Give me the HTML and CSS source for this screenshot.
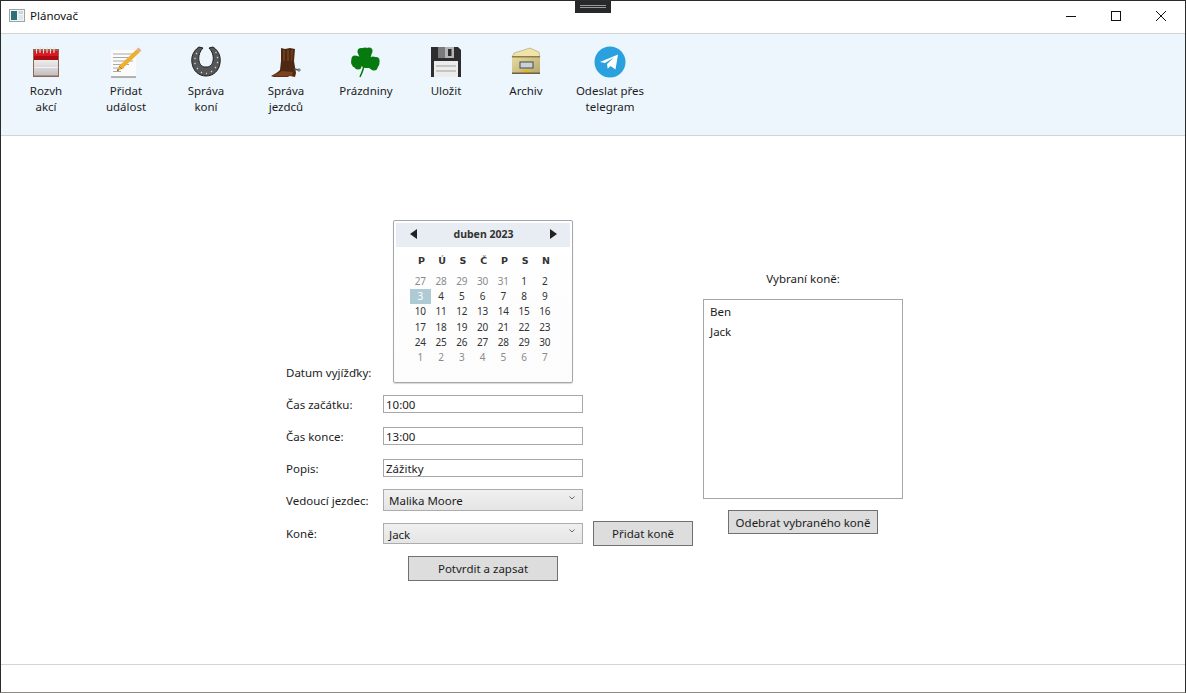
FILE: index.html
```html
<!DOCTYPE html>
<html lang="cs">
  <head>
    <meta charset="utf-8" />
    <title>Plánovač</title>
    <link rel="stylesheet" href="styles.css">
  </head>

  <body>
    <div class="window">
      <div class="grip"><span></span></div>

      <header class="titlebar">
        <svg class="app-icon" width="16" height="14" viewBox="0 0 16 14">
          <rect x="0.5" y="0.5" width="15" height="12" fill="#f2f5f6" stroke="#9aa5a8" />
          <rect x="2" y="2" width="6" height="9" fill="#2f6f7c" />
          <rect x="9.5" y="2" width="4.5" height="3" fill="#c9d6da" />
          <rect x="9.5" y="6" width="4.5" height="5" fill="#dfe6e8" />
        </svg>
        <span class="app-title">Plánovač</span>
        <div class="win-buttons">
          <svg width="12" height="12" viewBox="0 0 12 12"><path d="M1 6.500h10" stroke="#111" fill="none" /></svg>
          <svg width="12" height="12" viewBox="0 0 12 12"><rect x="1.500" y="1.500" width="9" height="9" stroke="#111" fill="none" /></svg>
          <svg width="12" height="12" viewBox="0 0 12 12"><path d="M1 1l10 10M11 1L1 11" stroke="#111" fill="none" /></svg>
        </div>
      </header>

      <nav class="ribbon">
        <a class="tool">
          <svg class="tool-icon" viewBox="0 0 32 32">
            <defs>
              <linearGradient id="pageGrad" x1="0" y1="0" x2="0" y2="1">
                <stop offset="0" stop-color="#efecec" />
                <stop offset="1" stop-color="#c4c0c2" />
              </linearGradient>
              <linearGradient id="boxGrad" x1="0" y1="0" x2="1" y2="1">
                <stop offset="0" stop-color="#e8dca0" />
                <stop offset="1" stop-color="#b3a672" />
              </linearGradient>
            </defs>
            <rect x="3" y="3" width="26" height="28" fill="#8b6a55" />
            <rect x="4" y="5" width="24" height="9" fill="#dd1620" />
            <rect x="4" y="10" width="24" height="4" fill="#a80d14" />
            <rect x="4" y="14" width="24" height="15.500" fill="url(#pageGrad)" />
            <rect x="4" y="21" width="24" height="1" fill="#f4f2f2" />
            <path d="M6.500 1.500v6M10 1v6M13.500 1.500v6M17 1v6M20.500 1.500v6M24 1v6" stroke="#ecdcd6" stroke-width="1.100" />
          </svg>
          <span>Rozvh<br>akcí</span>
        </a>
        <a class="tool">
          <svg class="tool-icon" viewBox="0 0 32 32">
            <rect x="1" y="4" width="25" height="27" fill="#fbfbfb" />
            <path d="M3 8h21M3 11.500h21M3 15h20M3 18.500h16M3 22h11M3 25.500h8" stroke="#a9a9a9" />
            <path d="M1 31h25" stroke="#6d6d6d" />
            <path d="M7 25l2-5L27 3l3 3-18 17z" fill="#edb02f" />
            <path d="M9 20l3 3" stroke="#b57c15" />
            <path d="M27 3l1.500-1.500 3 3L30 6z" fill="#e5a3a0" />
            <path d="M7 25l.7-2 1.300 1.200z" fill="#333" />
          </svg>
          <span>Přidat<br>událost</span>
        </a>
        <a class="tool">
          <svg class="tool-icon" viewBox="0 0 32 32">
            <path d="M9 1C3 5 1 11 2 17c1 8 7 13 14 13s13-5 14-13c1-6-1-12-7-16l-4 1c3 3 5 8 4 13-1 4-3 6-7 6s-6-2-7-6c-1-5 1-10 4-13z" fill="#545658" stroke="#1e1e1e" stroke-width="1" />
            <path d="M6 7l1 1M4.500 12l1 1M4.500 17l1 1M7 22l1 1M11 26l1 1M16 27.500h1M21 26l1-1M25 22l1-1M27 17l1-1M27 12l1-1M25.500 7l1-1" stroke="#cfcfcf" stroke-width="1.300" />
          </svg>
          <span>Správa<br>koní</span>
        </a>
        <a class="tool">
          <svg class="tool-icon" viewBox="0 0 32 32">
            <path d="M11 2l4 1 5-1 5 1-1 12 1 6 1 6-1 4-5-1-3 1H4l-3-1c3-2 6-3 9-6l1-9z" fill="#4d2812" />
            <path d="M13 4h10l-1 11h-9z" fill="#6b3d1e" />
            <path d="M16 4v11M20 4v11" stroke="#38190a" />
            <path d="M2 30c4-2 7-3 10-5l11 1-1 4-4-.500-3 1z" fill="#7d4220" />
            <path d="M24 23l5 1" stroke="#555" stroke-width="1.500" />
            <path d="M29 22v4M27 24h4" stroke="#777" />
          </svg>
          <span>Správa<br>jezdců</span>
        </a>
        <a class="tool">
          <svg class="tool-icon" viewBox="0 0 32 32">
            <circle cx="15" cy="8" r="6.500" fill="#067a0e" />
            <circle cx="11" cy="5.500" r="3.500" fill="#067a0e" />
            <circle cx="19" cy="5" r="3.500" fill="#067a0e" />
            <circle cx="7" cy="16" r="6" fill="#067a0e" />
            <circle cx="5" cy="13" r="3.500" fill="#067a0e" />
            <circle cx="8" cy="20" r="3.500" fill="#067a0e" />
            <circle cx="23" cy="17" r="6.500" fill="#067a0e" />
            <circle cx="26" cy="14.500" r="3.500" fill="#067a0e" />
            <circle cx="24" cy="21" r="3.500" fill="#067a0e" />
            <path d="M10 10h10l3 12-8 0-6-3z" fill="#067a0e" />
            <path d="M14 20c-1 4-2 7-4 11" stroke="#067a0e" stroke-width="1.500" fill="none" />
          </svg>
          <span>Prázdniny</span>
        </a>
        <a class="tool">
          <svg class="tool-icon" viewBox="0 0 32 32">
            <path d="M1 1h27l3 3v27H1z" fill="#2d2d30" />
            <rect x="8" y="1" width="16" height="11" fill="#b5b5b5" />
            <rect x="8" y="1" width="7" height="11" fill="#7a7a7a" />
            <rect x="18" y="3" width="3.500" height="7" fill="#2d2d30" />
            <rect x="4" y="15" width="24" height="16" fill="#ececec" />
            <path d="M6 20h20M6 25h20" stroke="#9d9d9d" />
          </svg>
          <span>Uložit</span>
        </a>
        <a class="tool">
          <svg class="tool-icon" viewBox="0 0 32 32">
            <path d="M4 7l16-5 9 4 1 5H2z" fill="#efe3aa" stroke="#a18e58" stroke-width="0.500" />
            <rect x="2" y="10" width="28" height="18" fill="url(#boxGrad)" />
            <rect x="2" y="10" width="28" height="1.500" fill="#8d7d48" />
            <rect x="2" y="26.500" width="28" height="1.500" fill="#6f6237" />
            <rect x="10" y="16" width="13" height="6" fill="#c7d3d8" stroke="#4a4a42" />
            <path d="M13 25h7" stroke="#e0b820" stroke-width="2" />
          </svg>
          <span>Archiv</span>
        </a>
        <a class="tool tool--wide">
          <svg class="tool-icon" viewBox="0 0 32 32">
            <circle cx="16" cy="16" r="15.500" fill="#2aa1de" />
            <path d="M6 16L24 8.500 21.500 23.500l-5-3.500-2.800 2.700-.7-4.700 7-6.500-9 5.500z" fill="#fff" />
          </svg>
          <span>Odeslat přes<br>telegram</span>
        </a>
      </nav>

      <main class="content">
        <section class="form">
          <label class="form-label form-label--date">Datum vyjížďky:</label>
          <div class="calendar">
            <div class="cal-head">
              <svg width="8" height="10" viewBox="0 0 8 10"><path d="M7 0v10L0 5z" fill="#222" /></svg>
              <span>duben 2023</span>
              <svg width="8" height="10" viewBox="0 0 8 10"><path d="M1 0v10l7-5z" fill="#222" /></svg>
            </div>
            <div class="cal-days">
              <b>P</b><b>Ú</b><b>S</b><b>Č</b><b>P</b><b>S</b><b>N</b>
            </div>
            <div class="cal-grid">
              <span class="dim">27</span><span class="dim">28</span><span class="dim">29</span><span class="dim">30</span><span class="dim">31</span><span>1</span><span>2</span>
              <span class="today">3</span><span>4</span><span>5</span><span>6</span><span>7</span><span>8</span><span>9</span>
              <span>10</span><span>11</span><span>12</span><span>13</span><span>14</span><span>15</span><span>16</span>
              <span>17</span><span>18</span><span>19</span><span>20</span><span>21</span><span>22</span><span>23</span>
              <span>24</span><span>25</span><span>26</span><span>27</span><span>28</span><span>29</span><span>30</span>
              <span class="dim">1</span><span class="dim">2</span><span class="dim">3</span><span class="dim">4</span><span class="dim">5</span><span class="dim">6</span><span class="dim">7</span>
            </div>
          </div>
          <span></span>

          <label class="form-label">Čas začátku:</label>
          <input class="text-input" type="text" value="10:00" />
          <span></span>

          <label class="form-label">Čas konce:</label>
          <input class="text-input" type="text" value="13:00" />
          <span></span>

          <label class="form-label">Popis:</label>
          <input class="text-input" type="text" value="Zážitky" />
          <span></span>

          <label class="form-label">Vedoucí jezdec:</label>
          <div class="combo combo--tall">
            <span>Malika Moore</span>
            <svg class="chevron" width="6" height="4" viewBox="0 0 6 4"><path d="M.5.500l2.500 2.500 2.500-2.500" stroke="#666" fill="none" /></svg>
          </div>
          <span></span>

          <label class="form-label">Koně:</label>
          <div class="combo">
            <span>Jack</span>
            <svg class="chevron" width="6" height="4" viewBox="0 0 6 4"><path d="M.5.500l2.500 2.500 2.500-2.500" stroke="#666" fill="none" /></svg>
          </div>
          <button class="btn btn--add">Přidat koně</button>

          <span></span>
          <button class="btn btn--confirm">Potvrdit a zapsat</button>
        </section>

        <aside class="picked">
          <p class="picked-title">Vybraní koně:</p>
          <ul class="picked-list">
            <li>Ben</li>
            <li>Jack</li>
          </ul>
          <button class="btn btn--remove">Odebrat vybraného koně</button>
        </aside>
      </main>

      <footer class="statusbar"></footer>
    </div>
  </body>
</html>
```

FILE: styles.css
```css
:root {
  font-family: 'Noto Sans', 'Open Sans', sans-serif;
  font-size: 11.5px;
  color: #1c1c1c;
}

* {
  box-sizing: border-box;
}

body {
  margin: 0;
  background: white;
}

.window {
  position: relative;
  display: flex;
  flex-direction: column;
  height: 693px;
  overflow: hidden;
  border: 1px solid #2b2b2b;
  border-bottom-color: #8a8a80;
}

/* the little dark tab that hangs from the top edge */
.grip {
  position: absolute;
  top: -1px;
  left: 574px;
  width: 36px;
  height: 13px;
  background: #26282a;
}

.grip span {
  display: block;
  width: 26px;
  margin: 5px auto 0;
  height: 3px;
  border-top: 1px solid #9a9a9a;
  border-bottom: 1px solid #9a9a9a;
}

.titlebar {
  display: flex;
  align-items: center;
  height: 33px;
  padding: 0 0 3px 8px;
  border-bottom: 1px solid #d4d4d4;
  flex-shrink: 0;
}

.app-title {
  margin-left: 5px;
  font-size: 11.5px;
  color: #111;
}

.win-buttons {
  display: flex;
  gap: 33px;
  margin-left: auto;
  margin-right: 18px;
}

.ribbon {
  display: flex;
  height: 102px;
  padding: 12px 0 0 5px;
  flex-shrink: 0;
  background: #eef6fd;
  border-bottom: 1px solid #d4d4d4;
}

.tool {
  display: flex;
  flex-direction: column;
  align-items: center;
  width: 80px;
  line-height: 16px;
  text-align: center;
}

.tool--wide {
  width: 88px;
}

.tool-icon {
  display: block;
  width: 32px;
  height: 32px;
  margin-bottom: 5px;
}

.content {
  display: flex;
  flex: 1;
  padding: 84px 0 0 285px;
}

.form {
  display: grid;
  grid-template-columns: 97px 200px 110px;
  grid-template-rows: 168px 32px 32px 32px 32px 35px auto;
  width: 417px;
  align-items: center;
  align-content: start;
}

.form-label {
  white-space: nowrap;
}

.form-label--date {
  align-self: end;
  padding-bottom: 8px;
}

.calendar {
  align-self: start;
  width: 180px;
  height: 163px;
  margin-left: 10px;
  padding: 2px;
  border: 1px solid #a3a7ab;
  border-radius: 2px;
  background: linear-gradient(#fff, #fcfcfd);
  box-shadow: 0 1px 1px #d8d8d8;
}

.cal-head {
  display: flex;
  align-items: center;
  justify-content: space-between;
  height: 24px;
  padding: 0 13px 2px 14px;
  background: #e8edf3;
  font-size: 10.5px;
  font-weight: 700;
  color: #333;
}

.cal-days {
  display: grid;
  grid-template-columns: repeat(7, 20.75px);
  margin: 6px 0 0 15px;
  height: 20px;
  font-family: 'DejaVu Sans', sans-serif;
  font-size: 9.5px;
  line-height: 16px;
  text-align: center;
  color: #333;
}

.cal-grid {
  display: grid;
  grid-template-columns: repeat(7, 20.75px);
  grid-auto-rows: 15.2px;
  margin: 1px 0 0 14px;
  font-size: 10px;
  line-height: 15px;
  text-align: center;
  color: #333;
}

.dim {
  color: #8a8a8a;
}

.today {
  background: #aecbd5;
  color: #fff;
}

.text-input {
  width: 200px;
  height: 18px;
  padding: 0 2px;
  border: 1px solid #a6a8ac;
  font: inherit;
  color: inherit;
  outline: none;
}

.combo {
  display: flex;
  align-items: center;
  justify-content: space-between;
  width: 200px;
  height: 21px;
  padding: 1px 7px 0 5px;
  border: 1px solid #acacac;
  background: linear-gradient(#f0f0f0, #e5e5e5);
}

.combo--tall {
  height: 22px;
}

.chevron {
  margin-bottom: 6px;
}

.btn {
  height: 25px;
  padding: 0;
  border: 1px solid #707070;
  background: #dddddd;
  font: inherit;
  color: inherit;
}

.btn--add {
  width: 100px;
  margin-left: 10px;
}

.btn--confirm {
  width: 150px;
  margin: 5px 0 0 25px;
}

.picked {
  width: 200px;
}

.picked-title {
  margin: 51px 0 12px;
  line-height: 16px;
  text-align: center;
}

.picked-list {
  height: 200px;
  margin: 0;
  padding: 2px 6px;
  list-style: none;
  border: 1px solid #a6a6a6;
}

.picked-list li {
  height: 20px;
  line-height: 20px;
}

.btn--remove {
  display: block;
  width: 150px;
  height: 24px;
  margin: 11px auto 0;
}

.statusbar {
  height: 28px;
  flex-shrink: 0;
  border-top: 1px solid #d4d4d4;
}
```
